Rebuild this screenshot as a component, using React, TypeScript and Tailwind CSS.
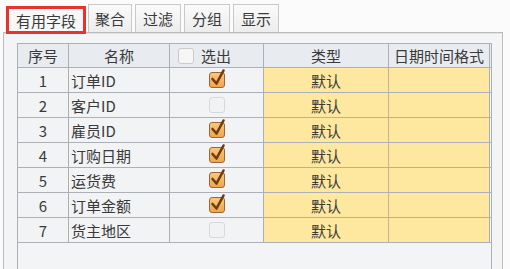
import React from "react";

type Row = { no: number; name: string; checked: boolean };

const rows: Row[] = [
  { no: 1, name: "订单ID", checked: true },
  { no: 2, name: "客户ID", checked: false },
  { no: 3, name: "雇员ID", checked: true },
  { no: 4, name: "订购日期", checked: true },
  { no: 5, name: "运货费", checked: true },
  { no: 6, name: "订单金额", checked: true },
  { no: 7, name: "货主地区", checked: false },
];

const tabs = [
  { label: "聚合", w: "w-[44px]" },
  { label: "过滤", w: "w-[46px]" },
  { label: "分组", w: "w-[46px]" },
  { label: "显示", w: "w-[46px]" },
];

function CheckBox({ checked }: { checked: boolean }) {
  if (!checked) {
    return (
      <div className="w-[16px] h-[16px] rounded-[3px] border border-[#d6d8dc] bg-[#f1f2f4]" />
    );
  }
  return (
    <div className="relative w-[16px] h-[16px] rounded-[3px] border-[1.5px] border-[#9b6638] bg-gradient-to-b from-[#fbc77a] to-[#f0a64b]">
      {/* tick */}
      <svg
        className="absolute -top-[5px] left-[0px]"
        width="17"
        height="19"
        viewBox="0 0 17 19"
      >
        <path
          d="M2.5 11 L6.5 15.5 L13.5 2.5"
          fill="none"
          stroke="#6e3d14"
          strokeWidth="2.6"
          strokeLinecap="round"
          strokeLinejoin="round"
        />
      </svg>
    </div>
  );
}

export default function App() {
  return (
    <div className="w-[510px] h-[269px] overflow-hidden bg-[#fbfbfb] text-[#3a3a3a] text-[15px] font-['Noto_Sans_CJK_SC','Noto_Sans',sans-serif]">
      {/* Tabs */}
      <div className="flex items-start h-[32px] pl-[6px]">
        <div className="relative z-10 mt-[6px] w-[80px] h-[28px] border-[3px] border-[#e53430] bg-[#f7f7f7] flex items-center justify-center leading-none">
          有用字段
        </div>
        <div className="flex gap-[3px] ml-[2px]">
          {tabs.map((t) => (
            <div
              key={t.label}
              className={`${t.w} mt-[4px] h-[28px] border border-b-0 border-[#c9c9c9] bg-gradient-to-b from-[#fafafa] to-[#ededed] flex items-center justify-center leading-none`}
            >
              {t.label}
            </div>
          ))}
        </div>
      </div>

      {/* Panel */}
      <div className="ml-[3px] w-[500px] h-[237px] border-t border-l border-r border-[#bcbcbc] shadow-[inset_0_1px_0_#e2e2e2] bg-[#f3f4f6] pt-[10px] pl-[13px]">
        <div className="w-[475px] h-[240px] border border-[#adb1b7] bg-[#f3f4f6] leading-none">
          {/* Header */}
          <div className="flex h-[24px] border-b border-[#adb1b7] bg-[#e8ebf0]">
            <div className="w-[51px] border-r border-[#adb1b7] flex items-center justify-center">
              序号
            </div>
            <div className="w-[101px] border-r border-[#adb1b7] flex items-center justify-center">
              名称
            </div>
            <div className="w-[94px] border-r border-[#adb1b7] flex items-center pl-[8px] gap-[7px]">
              <div className="w-[16px] h-[16px] rounded-[3px] border border-[#c9cbcf] bg-[#f6f6f7]" />
              <span>选出</span>
            </div>
            <div className="w-[125px] border-r border-[#adb1b7] flex items-center justify-center">
              类型
            </div>
            <div className="w-[101px] border-r border-[#adb1b7] flex items-center justify-center">
              日期时间格式
            </div>
          </div>

          {/* Rows */}
          {rows.map((r) => (
            <div key={r.no} className="flex h-[25px] w-[473px] border-b border-[#adb1b7]">
              <div className="w-[51px] border-r border-[#adb1b7] bg-[#f2f3f5] flex items-center justify-center">
                {r.no}
              </div>
              <div className="w-[101px] border-r border-[#adb1b7] bg-[#f2f3f5] flex items-center pl-[2px]">
                {r.name}
              </div>
              <div className="w-[94px] border-r border-[#adb1b7] bg-[#f2f3f5] flex items-center justify-center">
                <CheckBox checked={r.checked} />
              </div>
              <div className="w-[125px] border-r border-[#bdb593] bg-[#fee89f] flex items-center justify-center">
                默认
              </div>
              <div className="w-[101px] border-r border-[#adb1b7] bg-[#fee89f]" />
            </div>
          ))}
        </div>
      </div>
    </div>
  );
}
